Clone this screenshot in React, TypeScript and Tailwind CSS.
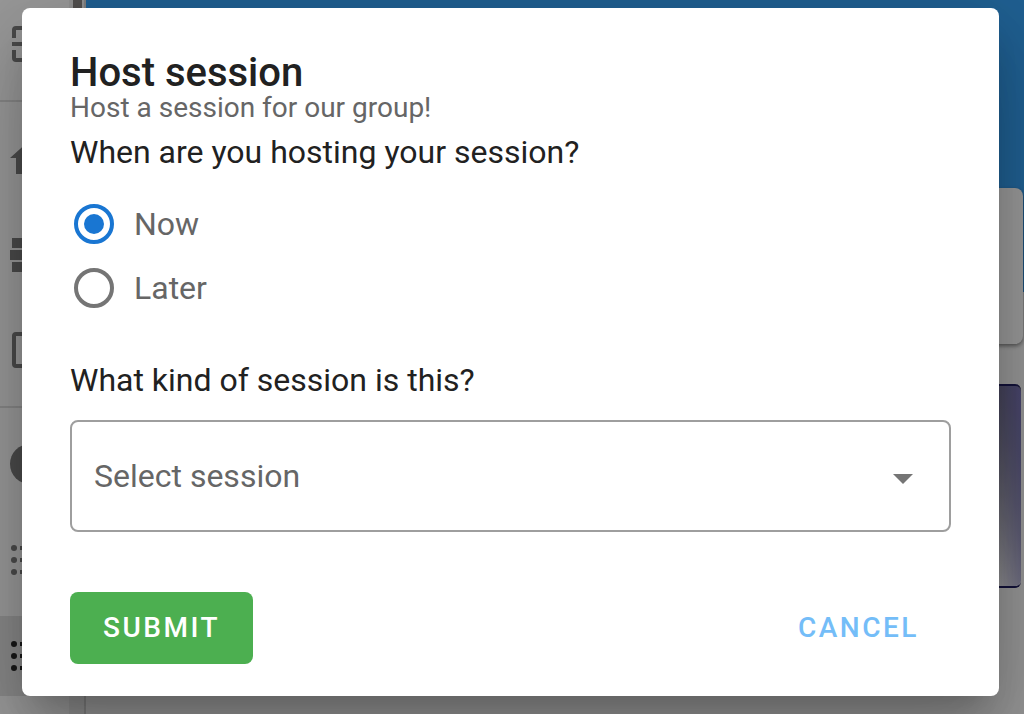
import { useState } from 'react';
import type { ReactNode } from 'react';

const Icon = ({ children }: { children: ReactNode }) => (
  <svg viewBox="0 0 24 24" className="h-12 w-12 shrink-0" fill="currentColor" aria-hidden="true">
    {children}
  </svg>
);

const ListIcon = () => (
  <Icon>
    <circle cx="4" cy="6" r="1.5" />
    <circle cx="4" cy="12" r="1.5" />
    <circle cx="4" cy="18" r="1.5" />
    <path d="M7 5h14v2H7zM7 11h14v2H7zM7 17h14v2H7z" />
  </Icon>
);

const Sidebar = () => (
  <aside className="flex w-[86px] shrink-0 border-r-2 border-[#cfcfcf] bg-white text-[#6f6f6f]">
    <nav className="min-w-0 flex-1 overflow-hidden">
      <div className="pt-5 pb-8 pl-1.5">
        <Icon>
          <path d="M3 9V5a2 2 0 0 1 2-2h4v2H5v4H3zM21 9V5a2 2 0 0 0-2-2h-4v2h4v4h2zM3 15v4a2 2 0 0 0 2 2h4v-2H5v-4H3zM21 15v4a2 2 0 0 1-2 2h-4v-2h4v-4h2zM3 11h18v2H3z" />
        </Icon>
      </div>
      <div className="flex flex-col gap-12 border-y-2 border-[#dcdcdc] py-8 pl-1.5">
        <Icon>
          <path d="M10 20v-6h4v6h5v-8h3L12 3 2 12h3v8z" />
        </Icon>
        <Icon>
          <path d="M3 4h18v5H3zM2 10h20v5H2zM3 16h18v5H3z" />
        </Icon>
        <Icon>
          <path d="M5 3h14a2 2 0 0 1 2 2v14a2 2 0 0 1-2 2H5a2 2 0 0 1-2-2V5a2 2 0 0 1 2-2zm0 2v14h14V5z" />
        </Icon>
      </div>
      <div className="flex flex-col gap-12 py-8 pl-1.5">
        <Icon>
          <circle cx="12" cy="12" r="10" />
        </Icon>
        <ListIcon />
      </div>
      <div className="bg-[#e0e0e0] py-4 pl-1.5 text-[#111111]">
        <ListIcon />
      </div>
    </nav>
    {/* scroll track */}
    <div className="w-[15px] bg-[#f1f1f1] px-0.5">
      <div className="ml-0.5 h-64 w-[9px] bg-[#7d7876]" />
    </div>
  </aside>
);

const Page = () => (
  <div className="flex h-full">
    <Sidebar />
    <main className="min-w-0 flex-1 bg-[#fafafa]">
      <div className="h-[292px] bg-[#2196f3] pt-[188px] pr-px">
        <div className="h-[156px] rounded-lg bg-white shadow-[0_2px_4px_rgba(0,0,0,0.5)]" />
        <div className="mt-10 mr-0.5 h-[204px] rounded-md border-y-2 border-[#0a0850] bg-linear-to-b from-[#5a5a5a] to-[#f4f4f4]">
          <div className="ml-auto h-full w-6 rounded-r-md bg-linear-to-bl from-[#6b66b0] to-transparent" />
        </div>
      </div>
    </main>
  </div>
);

const options = ['Now', 'Later'];

export default function App() {
  const [when, setWhen] = useState('Now');

  return (
    <div className="relative h-screen overflow-hidden font-[Roboto,sans-serif]">
      <Page />
      <div className="absolute inset-0 bg-[#212121]/46 pt-2 pr-[25px] pl-[22px]">
        <form
          role="dialog"
          aria-labelledby="dialog-title"
          onSubmit={(e) => e.preventDefault()}
          className="rounded-lg bg-white px-12 pt-11 pb-8 text-[32px] leading-10 text-[#212121] shadow-[0_22px_30px_-14px_rgba(0,0,0,0.2),0_48px_76px_6px_rgba(0,0,0,0.14),0_18px_92px_16px_rgba(0,0,0,0.12)]"
        >
          <h1 id="dialog-title" className="text-[40px] leading-[42px] font-medium">
            Host session
          </h1>
          <p className="text-[28px] leading-7 text-[#666666]">Host a session for our group!</p>

          <fieldset className="mt-2.5">
            <legend>When are you hosting your session?</legend>
            <div className="mt-8 flex flex-col gap-6 pl-1">
              {options.map((option) => (
                <label key={option} className="flex items-center gap-5 text-[#666666]">
                  <input
                    type="radio"
                    name="when"
                    value={option}
                    checked={when === option}
                    onChange={() => setWhen(option)}
                    className="grid h-10 w-10 appearance-none place-items-center rounded-full border-4 border-[#757575] before:h-5 before:w-5 before:rounded-full checked:border-[#1976d2] checked:before:bg-[#1976d2]"
                  />
                  {option}
                </label>
              ))}
            </div>
          </fieldset>

          <label htmlFor="kind" className="mt-13 block">
            What kind of session is this?
          </label>
          <div className="relative mt-5">
            <select
              id="kind"
              className="block h-28 w-full appearance-none rounded-lg border-2 border-[#9e9e9e] bg-white px-[22px] text-[#666666]"
            >
              <option>Select session</option>
            </select>
            <svg
              viewBox="0 0 20 10"
              className="pointer-events-none absolute top-[54px] right-[38px] h-2.5 w-5"
              fill="#757575"
              aria-hidden="true"
            >
              <path d="M0 0h20L10 10z" />
            </svg>
          </div>

          <div className="mt-15 flex justify-between text-[28px] font-medium">
            <button type="submit" className="h-18 rounded-lg bg-[#4caf50] px-[33px] tracking-[0.09em] text-white uppercase">
              Submit
            </button>
            <button type="button" className="h-18 rounded-lg px-8 tracking-[0.09em] text-[#74bdf8] uppercase">
              Cancel
            </button>
          </div>
        </form>
      </div>
    </div>
  );
}
